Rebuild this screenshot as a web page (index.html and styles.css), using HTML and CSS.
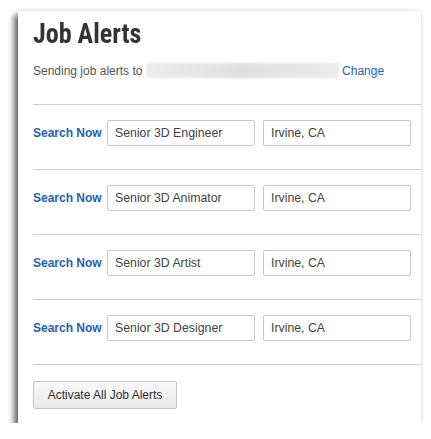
FILE: index.html
```html
<!DOCTYPE html>
<html>
<head>
<meta charset="utf-8">
<link rel="stylesheet" href="styles.css">
</head>
<body>
<div class="card">
  <h1 class="title">Job Alerts</h1>
  <p class="sending">Sending job alerts to <span class="email"></span> <a class="link" href="#">Change</a></p>
  <div class="row">
    <a class="search" href="#">Search Now</a>
    <div class="field">Senior 3D Engineer</div>
    <div class="field">Irvine, CA</div>
  </div>
  <div class="row">
    <a class="search" href="#">Search Now</a>
    <div class="field">Senior 3D Animator</div>
    <div class="field">Irvine, CA</div>
  </div>
  <div class="row">
    <a class="search" href="#">Search Now</a>
    <div class="field">Senior 3D Artist</div>
    <div class="field">Irvine, CA</div>
  </div>
  <div class="row">
    <a class="search" href="#">Search Now</a>
    <div class="field">Senior 3D Designer</div>
    <div class="field">Irvine, CA</div>
  </div>
  <div class="footer">
    <button class="btn">Activate All Job Alerts</button>
  </div>
</div>
</body>
</html>
```
FILE: styles.css
```css
html, body {
  margin: 0;
  padding: 0;
  background: #fff;
}
body {
  padding: 11px 10px 0 18px;
  font-family: "Liberation Sans", Arial, sans-serif;
}
.card {
  width: 403px;
  height: 412px;
  box-sizing: border-box;
  background: #fff;
  padding: 0 0 0 15px;
  box-shadow: -4px 4px 6px rgba(0,0,0,0.6), 0 0 4px rgba(0,0,0,0.12);
}
.title {
  margin: 0;
  padding-top: 7px;
  font-family: Roboto, "Liberation Sans", sans-serif;
  font-weight: 700;
  font-size: 28px;
  line-height: 32px;
  color: #333;
  font-stretch: 78%;
  transform: scaleX(0.93);
  transform-origin: left center;
}
.sending {
  margin: 13px 0 0;
  font-size: 12px;
  line-height: 16px;
  color: #555;
  height: 16px;
  padding-bottom: 25px;
}
.email {
  display: inline-block;
  vertical-align: -3px;
  width: 193px;
  height: 15px;
  background: linear-gradient(90deg, #ececec, #e0e0e0 50%, #ececec);
  filter: blur(1px);
}
.link {
  color: #2460b8;
  text-decoration: none;
}
.row {
  border-top: 1px solid #cfcfcf;
  display: flex;
  align-items: center;
  gap: 8px;
  padding: 15px 10px 23px 0;
}
.search {
  width: 67px;
  margin-right: -1px;
  font-size: 12px;
  font-weight: 700;
  color: #2460b8;
  text-decoration: none;
  white-space: nowrap;
}
.field {
  flex: 1;
  height: 26px;
  box-sizing: border-box;
  border: 1px solid #c8c8c8;
  border-radius: 2px;
  padding: 0 7px;
  font-size: 12.3px;
  line-height: 24px;
  color: #444;
}
.footer {
  border-top: 1px solid #cfcfcf;
  padding-top: 16px;
}
.btn {
  width: 144px;
  height: 28px;
  font-family: "Liberation Sans", Arial, sans-serif;
  font-size: 12px;
  color: #333;
  border: 1px solid #c6c6c6;
  border-radius: 2px;
  background: linear-gradient(#f9f9f9, #e9e9e9);
  padding: 0;
}
```
